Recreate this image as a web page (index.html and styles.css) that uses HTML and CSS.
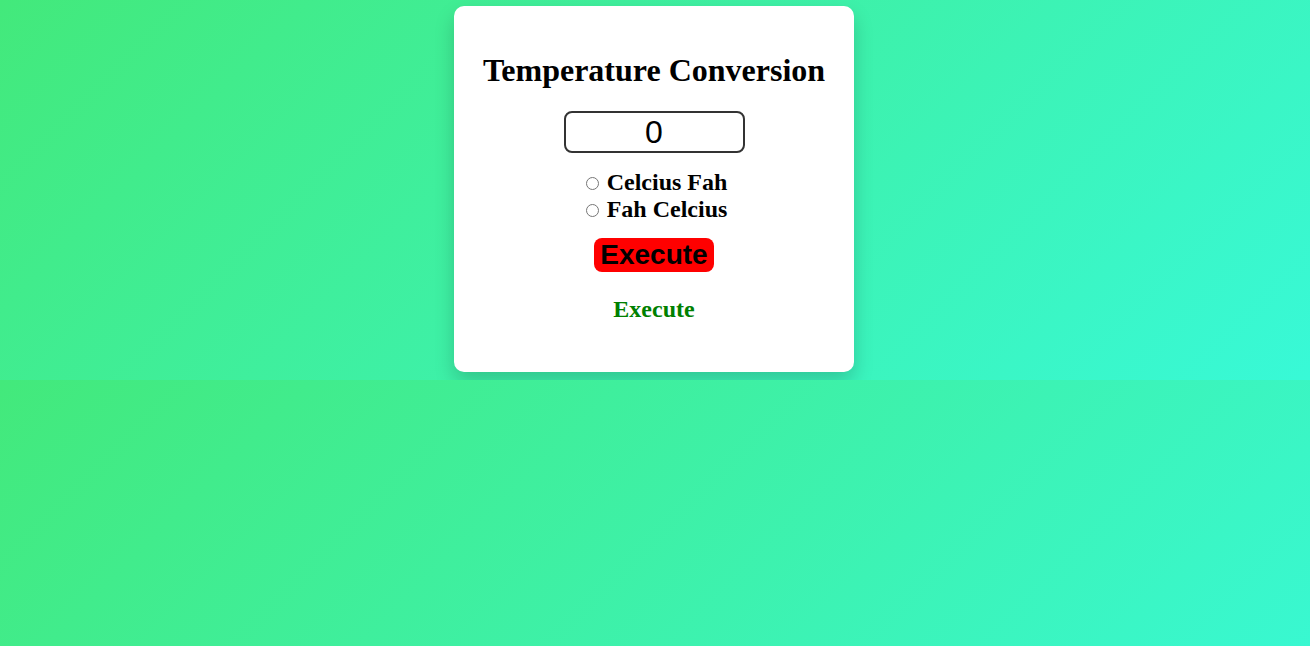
FILE: index.html
```html
<!DOCTYPE html>
<html lang="en">
<head>
<meta charset="utf-8">
<title>Temperature Conversion</title>
<link rel="stylesheet" href="styles.css">
</head>
<body>
<div class="card">
  <h1 class="title">Temperature Conversion</h1>
  <input class="value" type="text" value="0">
  <div class="options">
    <label class="option"><input type="radio" name="mode"> Celcius Fah</label>
    <label class="option"><input type="radio" name="mode"> Fah Celcius</label>
  </div>
  <button class="run">Execute</button>
  <p class="result">Execute</p>
</div>
</body>
</html>
```
FILE: styles.css
```css
html {
  background: linear-gradient(135deg, #43e97b 0%, #38f9d7 100%);
}
body {
  margin: 0;
  padding: 6px 0 8px;
  font-family: "Liberation Serif", "Times New Roman", serif;
}
.card {
  width: 400px;
  margin: 0 auto;
  background: #fff;
  border-radius: 10px;
  box-shadow: 0 10px 20px rgba(0, 0, 0, 0.18);
  padding: 25px 0 30px;
  display: flex;
  flex-direction: column;
  align-items: center;
  box-sizing: border-box;
  height: 366px;
  position: relative;
  left: -1px;
}
.title {
  font-size: 32px;
  font-weight: bold;
  margin: 21px 0 22px;
}
.value {
  width: 181px;
  height: 42px;
  box-sizing: border-box;
  border: 2px solid #333;
  border-radius: 8px;
  font-family: "Liberation Sans", Arial, sans-serif;
  font-size: 32px;
  text-align: center;
  padding: 0;
  outline: none;
}
.options {
  display: flex;
  flex-direction: column;
  align-items: flex-start;
  margin-top: 16px;
}
.option {
  display: block;
  font-size: 24px;
  font-weight: bold;
  line-height: 27px;
}
.option input {
  margin: 0 2px 0 5px;
  width: 13px;
  height: 13px;
  vertical-align: 0;
}
.run {
  margin-top: 15px;
  background: #f00;
  border: none;
  border-radius: 8px;
  font-family: "Liberation Sans", Arial, sans-serif;
  font-weight: bold;
  font-size: 28px;
  padding: 1px 6px;
  color: #000;
}
.result {
  color: #008000;
  font-weight: bold;
  font-size: 24px;
  margin: 24px 0 0;
}
```
